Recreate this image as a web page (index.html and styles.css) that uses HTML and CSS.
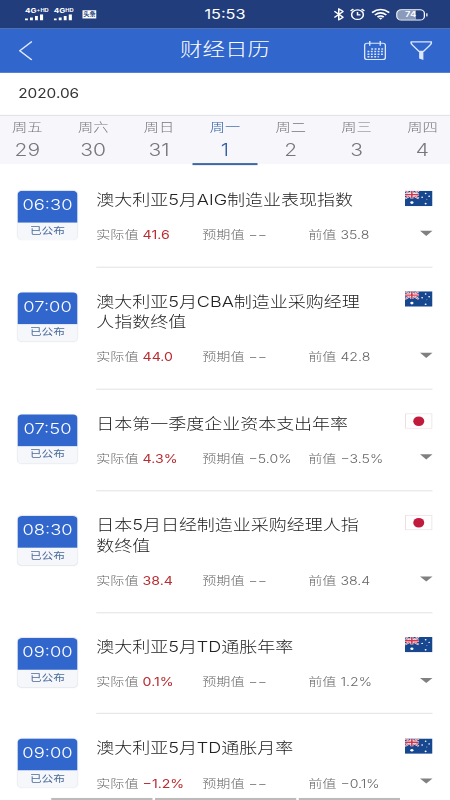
FILE: index.html
```html
<!DOCTYPE html>
<html lang="zh-CN">
<head>
    <meta charset="UTF-8">
    <meta name="viewport" content="width=device-width, initial-scale=1.0">
    <title>财经日历</title>
    <link rel="stylesheet" href="styles.css">
</head>
<body>
    <div class="app">
        <div class="status-bar">
            <div class="status-left">
                <div class="signal">
                    <span>4G<small>+HD</small></span>
                    <svg width="15" height="6" viewBox="0 0 15 6"><path d="M0 4h2.300v2H0zM4 3h2.300v3H4zM8 1.500h2.300V6H8zM12 0h2.500v6H12z" fill="#fff"/></svg>
                </div>
                <div class="signal">
                    <span>4G<small>HD</small></span>
                    <svg width="15" height="6" viewBox="0 0 15 6"><path d="M0 4h2.300v2H0zM4 3h2.300v3H4zM8 1.500h2.300V6H8zM12 0h2.500v6H12z" fill="#fff"/></svg>
                </div>
                <span class="news-tag">头条</span>
            </div>
            <div class="clock">15:53</div>
            <div class="status-right">
                <svg width="8" height="12" viewBox="0 0 8 12"><path d="M.5 3l7 5.800L4 11.500V.5l3.500 2.700L.5 9" fill="none" stroke="#fff" stroke-width="1.200"/></svg>
                <svg width="12" height="12" viewBox="0 0 12 12" fill="none" stroke="#fff" stroke-width="1.200"><circle cx="6" cy="6.300" r="4.700"/><path d="M6 3.700v2.800h2.400M.5 2.800L2.700.8M11.500 2.800L9.300.8"/></svg>
                <svg width="15" height="12" viewBox="0 0 15 12" fill="none" stroke="#fff" stroke-width="1.500"><path d="M.6 4.300Q7.500-1.800 14.400 4.300M2.900 6.600Q7.500 2.600 12.100 6.600M5 8.700Q7.500 6.600 10 8.700"/><path d="M5.800 9.300h3.400L7.500 11.300z" fill="#fff" stroke="none"/></svg>
                <div class="battery"><span>74</span></div>
            </div>
        </div>

        <header class="header">
            <svg class="back" width="11" height="19" viewBox="0 0 11 19"><path d="M10.500.5L.8 9.500l9.700 9" fill="none" stroke="#dfe9fb" stroke-width="1.200"/></svg>
            <h1>财经日历</h1>
            <div class="header-actions">
                <svg width="18" height="19" viewBox="0 0 18 19" fill="none" stroke="#dce7fb" stroke-width="1.100">
                    <rect x=".7" y="2.200" width="16.600" height="15.800" rx="2"/>
                    <path d="M4.800 0v4.500M13.200 0v4.500"/>
                    <path d="M6 7.700h9.500M3 10.300h12.500M3 12.900h12.500M3 15.400h9" stroke-width="1.400" stroke-dasharray="1.500 1.200"/>
                </svg>
                <svg width="18" height="19" viewBox="0 0 18 19" fill="none" stroke="#dce7fb" stroke-width="1.200">
                    <path d="M1 .8h16q.5 1.700-.8 2.900L10.800 10H7.200L1.800 3.700Q.5 2.500 1 .8z"/>
                    <path d="M7.300 10h3.400v8.600l-3.400-1.600z" fill="#dce7fb" stroke="none"/>
                </svg>
            </div>
        </header>

        <div class="month">2020.06</div>

        <div class="week">
            <div class="day"><span>周五</span><b>29</b></div>
            <div class="day"><span>周六</span><b>30</b></div>
            <div class="day"><span>周日</span><b>31</b></div>
            <div class="day active"><span>周一</span><b>1</b></div>
            <div class="day"><span>周二</span><b>2</b></div>
            <div class="day"><span>周三</span><b>3</b></div>
            <div class="day"><span>周四</span><b>4</b></div>
        </div>

        <div class="event-list" id="event-list">
            <!-- Events will be displayed here -->
        </div>

        <div class="nav-hints"><i></i><i></i><i></i></div>
    </div>

    <script src="script.js"></script>
</body>
</html>
```
FILE: styles.css
```css
body {
    margin: 0;
    width: 450px;
    height: 800px;
    overflow: hidden;
    background-color: #fff;
    font-family: Inter, "Noto Sans CJK SC", sans-serif;
}
/* 360x780 phone layout stretched to fill the window */
.app {
    position: relative;
    display: flex;
    flex-direction: column;
    width: 360px;
    height: 780px;
    overflow: hidden;
    transform: scale(1.25, 1.02564);
    transform-origin: 0 0;
}
.status-bar {
    display: grid;
    grid-template-columns: 1fr auto 1fr;
    align-items: center;
    flex: none;
    height: 28px;
    padding: 0 20px;
    background-color: #213d7b;
    color: #fff;
}
.status-left,
.status-right {
    display: flex;
    align-items: center;
}
.status-left {
    gap: 4px;
}
.signal {
    width: 19px;
}
.signal span {
    display: block;
    font-size: 6.500px;
    line-height: 6px;
    font-weight: 700;
    white-space: nowrap;
}
.signal small {
    font-size: 4.500px;
    vertical-align: 1.500px;
    line-height: 1px;
}
.signal svg {
    display: block;
}
.news-tag {
    padding: 0 .5px;
    background-color: #fff;
    color: #213d7b;
    font-size: 5px;
    line-height: 8px;
    font-weight: 700;
}
.clock {
    font-size: 13px;
    line-height: 16px;
}
.status-right {
    justify-content: flex-end;
    gap: 5px;
}
.battery {
    position: relative;
    width: 21px;
    height: 9px;
    border: 1px solid #fff;
    border-radius: 4px;
    background: linear-gradient(90deg, #8a9abb 70%, transparent 70%);
    font-size: 7.500px;
    line-height: 9px;
    font-weight: 600;
    text-align: center;
}
.battery::after {
    content: "";
    position: absolute;
    right: -3px;
    top: 3px;
    width: 1px;
    height: 3px;
    background-color: #fff;
}
.header {
    display: grid;
    grid-template-columns: 1fr auto 1fr;
    align-items: center;
    flex: none;
    height: 42.500px;
    padding: 0 14px;
    background-color: #3166cc;
}
.back {
    margin-left: 1px;
    margin-top: 1px;
}
.header h1 {
    margin: -4px 0 0;
    font-size: 18px;
    font-weight: 300;
    color: #fff;
}
.header-actions {
    display: flex;
    justify-content: flex-end;
    gap: 19px;
}
.month {
    box-sizing: border-box;
    flex: none;
    height: 42px;
    padding-left: 14.500px;
    border-bottom: 1px solid #dedfe5;
    font-size: 12.300px;
    line-height: 41px;
    color: #333;
}
.week {
    display: grid;
    grid-template-columns: repeat(7, 52.700px);
    flex: none;
    height: 47.500px;
    margin-left: -4.500px;
    background-color: #f6f6fb;
    color: #77777b;
    text-align: center;
}
.day {
    box-sizing: border-box;
    padding-top: 3px;
}
.day span,
.day b {
    display: block;
    font-weight: 300;
}
.day span {
    font-size: 12.200px;
    line-height: 18px;
}
.day b {
    font-size: 16.800px;
    line-height: 25.500px;
}
.day.active {
    border-bottom: 2px solid #3f68a6;
    color: #2e5fa3;
}
.event-list {
    flex: none;
    padding-top: 2px;
}
.event {
    display: flex;
    padding: 0 14px;
}
.badge {
    flex: none;
    width: 48px;
    height: 48px;
    margin-top: 24px;
    border-radius: 4px;
    overflow: hidden;
    background-color: #f6f7fb;
    box-shadow: 0 0 1px #e2e4ea;
    text-align: center;
}
.badge-time {
    height: 31px;
    background-color: #3166cc;
    color: #fff;
    font-size: 14.700px;
    line-height: 29.500px;
    font-weight: 300;
}
.badge-state {
    font-size: 9.400px;
    line-height: 16px;
    color: #4a6b9b;
}
.event-body {
    flex: 1;
    box-sizing: border-box;
    margin-left: 15px;
    padding: 23px 0 22.200px;
    border-bottom: 1px solid #e3e3e3;
}
.event-top,
.event-values {
    display: flex;
    justify-content: space-between;
}
.title {
    width: 216px;
    font-size: 14.400px;
    line-height: 20.500px;
    font-weight: 300;
    color: #222;
}
.flag {
    flex: none;
    width: 22px;
    height: 15px;
    margin-top: .5px;
}
.event-values {
    margin-top: 13.500px;
    align-items: center;
    height: 18.500px;
    font-size: 11.300px;
    font-weight: 300;
    color: #666;
}
.event-values span {
    width: 84.800px;
    white-space: nowrap;
}
.event-values em {
    font-style: normal;
    font-weight: 400;
    color: #b92c32;
}
.arrow {
    margin-left: auto;
    margin-bottom: 2px;
    border: 5px solid transparent;
    border-top-color: #808080;
    border-bottom: 0;
}
.nav-hints {
    position: absolute;
    left: 40.500px;
    bottom: 0;
    display: grid;
    grid-template-columns: 81px 113px 81px;
    gap: 2px;
}
.nav-hints i {
    height: 2.500px;
    background-color: #bbb;
}
```
FILE: script.js
```
const flags = {
    au: `<svg class="flag" viewBox="0 0 22 15" preserveAspectRatio="none">
        <rect width="22" height="15" fill="#17478f"/>
        <path d="M0 0l11 7.500M11 0L0 7.500" stroke="#fff" stroke-width="1.700"/>
        <path d="M0 0l11 7.500M11 0L0 7.500" stroke="#d8354a" stroke-width=".7"/>
        <path d="M5.500 0v7.500M0 3.700h11" stroke="#fff" stroke-width="2.400"/>
        <path d="M5.500 0v7.500M0 3.700h11" stroke="#d8354a" stroke-width="1.300"/>
        <g fill="#fff"><circle cx="5.500" cy="11.500" r="1.300"/><circle cx="16.500" cy="2.700" r=".7"/><circle cx="13.700" cy="6.300" r=".7"/><circle cx="19.300" cy="5.300" r=".7"/><circle cx="17.500" cy="8.300" r=".4"/><circle cx="16.500" cy="12.600" r=".8"/></g>
    </svg>`,
    jp: `<svg class="flag" viewBox="0 0 22 15" preserveAspectRatio="none">
        <rect x=".4" y=".4" width="21.200" height="14.200" fill="#fff" stroke="#eedde2" stroke-width=".8"/>
        <ellipse cx="11" cy="7.700" rx="4.400" ry="4.700" fill="#c21a3d"/>
    </svg>`
};

const events = [
    { time: "06:30", title: "澳大利亚5月AIG制造业表现指数", flag: "au", actual: "41.6", forecast: "−−", previous: "35.8" },
    { time: "07:00", title: "澳大利亚5月CBA制造业采购经理人指数终值", flag: "au", actual: "44.0", forecast: "−−", previous: "42.8" },
    { time: "07:50", title: "日本第一季度企业资本支出年率", flag: "jp", actual: "4.3%", forecast: "−5.0%", previous: "−3.5%" },
    { time: "08:30", title: "日本5月日经制造业采购经理人指数终值", flag: "jp", actual: "38.4", forecast: "−−", previous: "38.4" },
    { time: "09:00", title: "澳大利亚5月TD通胀年率", flag: "au", actual: "0.1%", forecast: "−−", previous: "1.2%" },
    { time: "09:00", title: "澳大利亚5月TD通胀月率", flag: "au", actual: "−1.2%", forecast: "−−", previous: "−0.1%" }
];

document.getElementById("event-list").innerHTML = events
    .map(
        (event) => `
        <div class="event">
            <div class="badge">
                <div class="badge-time">${event.time}</div>
                <div class="badge-state">已公布</div>
            </div>
            <div class="event-body">
                <div class="event-top">
                    <div class="title">${event.title}</div>
                    ${flags[event.flag]}
                </div>
                <div class="event-values">
                    <span>实际值 <em>${event.actual}</em></span>
                    <span>预期值 ${event.forecast}</span>
                    <span>前值 ${event.previous}</span>
                    <i class="arrow"></i>
                </div>
            </div>
        </div>
    `
    )
    .join("");
```
